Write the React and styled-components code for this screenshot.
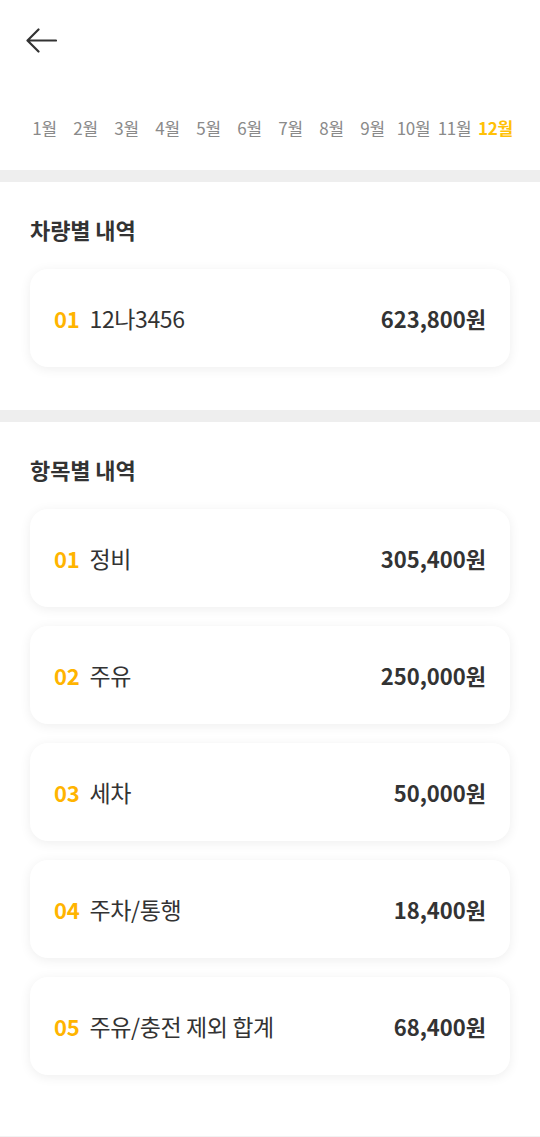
import React from "react";
import styled, { createGlobalStyle } from "styled-components";

const GlobalStyle = createGlobalStyle`
  html, body { margin: 0; padding: 0; background: #ffffff; }
  body { font-family: "Noto Sans CJK KR", "Noto Sans", sans-serif; color: #333333; }
  * { box-sizing: border-box; }
`;

const Page = styled.div`
  width: 540px;
  min-height: 1137px;
  background: #ffffff;
  display: flex;
  flex-direction: column;
`;

const Header = styled.header`
  height: 80px;
  display: flex;
  align-items: center;
  padding-left: 26px;
`;

const BackButton = styled.button`
  border: 0;
  background: none;
  padding: 0;
  width: 32px;
  height: 26px;
  display: flex;
  align-items: center;
  cursor: pointer;
`;

const MonthBar = styled.nav`
  display: grid;
  grid-template-columns: repeat(12, 1fr);
  padding: 36px 24px 30px;
`;

const Month = styled.span`
  text-align: center;
  font-size: 17px;
  line-height: 24px;
  letter-spacing: -0.3px;
  color: ${(p) => (p.$active ? "#FFC107" : "#8a8a8a")};
  font-weight: ${(p) => (p.$active ? 700 : 400)};
`;

const Divider = styled.div`
  height: 12px;
  background: #eeeeee;
`;

const Section = styled.section`
  padding: 32px 30px ${(p) => p.$bottom}px;
  display: flex;
  flex-direction: column;
`;

const SectionTitle = styled.h2`
  margin: 0 0 25px;
  font-size: 22px;
  line-height: 30px;
  font-weight: 700;
  color: #333333;
  letter-spacing: -0.1px;
`;

const CardList = styled.div`
  display: flex;
  flex-direction: column;
  gap: 19px;
`;

const Card = styled.div`
  height: 98px;
  border-radius: 18px;
  background: #ffffff;
  box-shadow: 0 2px 12px rgba(0, 0, 0, 0.07);
  display: flex;
  align-items: center;
  justify-content: space-between;
  padding: 0 24px;
`;

const Left = styled.div`
  display: flex;
  align-items: center;
  gap: 10px;
`;

const Index = styled.span`
  font-size: 22px;
  font-weight: 700;
  color: #FFB400;
  letter-spacing: -0.2px;
`;

const Label = styled.span`
  font-size: 23px;
  font-weight: 400;
  color: #333333;
  letter-spacing: -0.4px;
`;

const Amount = styled.span`
  font-size: 22px;
  font-weight: 700;
  color: #333333;
  letter-spacing: 0;
`;

const BottomLine = styled.div`
  margin-top: auto;
  height: 1px;
  background: #f2f2f2;
`;

const months = Array.from({ length: 12 }, (_, i) => `${i + 1}월`);

const vehicles = [{ idx: "01", label: "12나3456", amount: "623,800원" }];

const items = [
  { idx: "01", label: "정비", amount: "305,400원" },
  { idx: "02", label: "주유", amount: "250,000원" },
  { idx: "03", label: "세차", amount: "50,000원" },
  { idx: "04", label: "주차/통행", amount: "18,400원" },
  { idx: "05", label: "주유/충전 제외 합계", amount: "68,400원" },
];

function Row({ idx, label, amount }) {
  return (
    <Card>
      <Left>
        <Index>{idx}</Index>
        <Label>{label}</Label>
      </Left>
      <Amount>{amount}</Amount>
    </Card>
  );
}

export default function App() {
  return (
    <>
      <GlobalStyle />
      <Page>
        <Header>
          <BackButton aria-label="뒤로">
            <svg width="31" height="25" viewBox="0 0 31 25" fill="none">
              <path
                d="M30 12.5H2M12.5 1.5L1.5 12.5L12.5 23.5"
                stroke="#333333"
                strokeWidth="2.2"
                strokeLinecap="round"
                strokeLinejoin="round"
              />
            </svg>
          </BackButton>
        </Header>
        <MonthBar>
          {months.map((m, i) => (
            <Month key={m} $active={i === 11}>
              {m}
            </Month>
          ))}
        </MonthBar>
        <Divider />
        <Section $bottom={43}>
          <SectionTitle>차량별 내역</SectionTitle>
          <CardList>
            {vehicles.map((v) => (
              <Row key={v.idx} {...v} />
            ))}
          </CardList>
        </Section>
        <Divider />
        <Section $bottom={60}>
          <SectionTitle>항목별 내역</SectionTitle>
          <CardList>
            {items.map((v) => (
              <Row key={v.idx} {...v} />
            ))}
          </CardList>
        </Section>
        <BottomLine />
      </Page>
    </>
  );
}
